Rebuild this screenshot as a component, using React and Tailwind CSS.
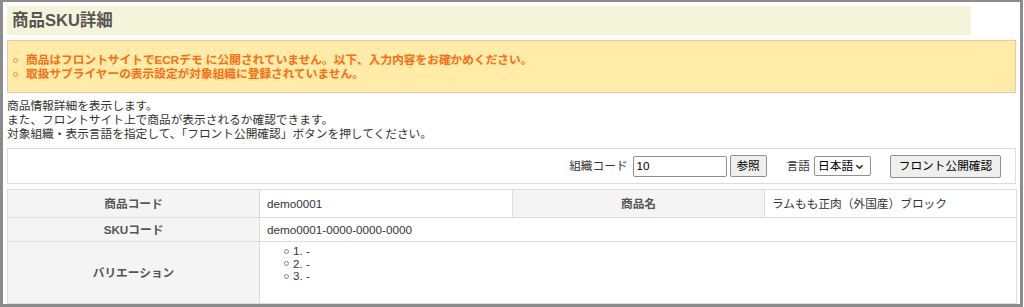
import React from "react";

const Ring = ({ className = "" }) => (
  <span className={"inline-block w-[5px] h-[5px] rounded-full border " + className} />
);

export default function App() {
  return (
    <div className="w-[1024px] h-[307px] bg-white overflow-hidden">
      <div className="w-[1023px] h-[307px] border-[3px] border-t-2 border-[#8c8c8c] px-[4px] pt-[4px] overflow-hidden text-[11.7px] leading-[14px] text-[#333] font-['Liberation_Sans','Noto_Sans_CJK_JP',sans-serif]">
        {/* Title */}
        <div className="mr-[45px] h-[29px] bg-[#f5f4da] flex items-center pl-[5px]">
          <h1 className="text-[16.5px] font-bold text-[#555] leading-none">商品SKU詳細</h1>
        </div>

        {/* Alert */}
        <div className="mt-[5px] h-[53px] border border-[#ffbfa6] bg-[#ffeca8] flex flex-col justify-center pt-[1px] font-bold text-[#ff6d12]">
          <div className="flex items-center">
            <Ring className="ml-[5px] mr-[8px] border-[#ff8a3a]" />
            <span>商品はフロントサイトでECRデモ に公開されていません。以下、入力内容をお確かめください。</span>
          </div>
          <div className="flex items-center">
            <Ring className="ml-[5px] mr-[8px] border-[#ff8a3a]" />
            <span>取扱サプライヤーの表示設定が対象組織に登録されていません。</span>
          </div>
        </div>

        {/* Description */}
        <div className="mt-[6px]">
          <p>商品情報詳細を表示します。</p>
          <p>また、フロントサイト上で商品が表示されるか確認できます。</p>
          <p>対象組織・表示言語を指定して、「フロント公開確認」ボタンを押してください。</p>
        </div>

        {/* Form */}
        <div className="mt-[7px] h-[36px] border border-[#dddddd] flex items-center justify-end pr-[14px]">
          <span className="mr-[5px]">組織コード</span>
          <div className="w-[94px] h-[21px] border border-[#8f8f8f] rounded-[2px] flex items-center pl-[3px] text-black">10</div>
          <button className="ml-[3px] w-[37px] h-[22px] border border-[#8f8f8f] rounded-[2px] bg-[#efefef] text-black">参照</button>
          <span className="ml-[20px] mr-[4px]">言語</span>
          <div className="w-[57px] h-[20px] border border-[#8f8f8f] rounded-[2px] flex items-center pl-[3px] text-black">
            <span>日本語</span>
            <svg width="9" height="9" viewBox="0 0 10 10" className="ml-[2px]">
              <path d="M1.5 3.5 L5 7 L8.5 3.5" fill="none" stroke="#222" strokeWidth="1.6" />
            </svg>
          </div>
          <button className="ml-[19px] w-[111px] h-[23px] border border-[#8f8f8f] rounded-[2px] bg-[#efefef] text-black">フロント公開確認</button>
        </div>

        {/* Table */}
        <table className="mt-[5px] w-[1009px] table-fixed border-collapse">
          <colgroup>
            <col className="w-[252px]" />
            <col className="w-[253px]" />
            <col className="w-[252px]" />
            <col className="w-[252px]" />
          </colgroup>
          <tbody>
            <tr className="h-[28px]">
              <th className="border border-[#dddddd] bg-[#f4f4f4] font-bold text-[#555] text-center">商品コード</th>
              <td className="border border-[#dddddd] px-[7px]">demo0001</td>
              <th className="border border-[#dddddd] bg-[#f4f4f4] font-bold text-[#555] text-center">商品名</th>
              <td className="border border-[#dddddd] px-[7px]">ラムもも正肉（外国産）ブロック</td>
            </tr>
            <tr className="h-[24px]">
              <th className="border border-[#dddddd] bg-[#f4f4f4] font-bold text-[#555] text-center">SKUコード</th>
              <td colSpan={3} className="border border-[#dddddd] px-[7px]">demo0001-0000-0000-0000</td>
            </tr>
            <tr className="h-[62px]">
              <th className="border border-[#dddddd] bg-[#f4f4f4] font-bold text-[#555] text-center">バリエーション</th>
              <td colSpan={3} className="border border-[#dddddd] px-[7px] align-top pt-[3px]">
                <ul className="leading-[12.5px]">
                  {["1. -", "2. -", "3. -"].map((t) => (
                    <li key={t} className="flex items-center">
                      <Ring className="ml-[17px] mr-[4px] border-[#888]" />
                      <span>{t}</span>
                    </li>
                  ))}
                </ul>
              </td>
            </tr>
          </tbody>
        </table>
      </div>
    </div>
  );
}
